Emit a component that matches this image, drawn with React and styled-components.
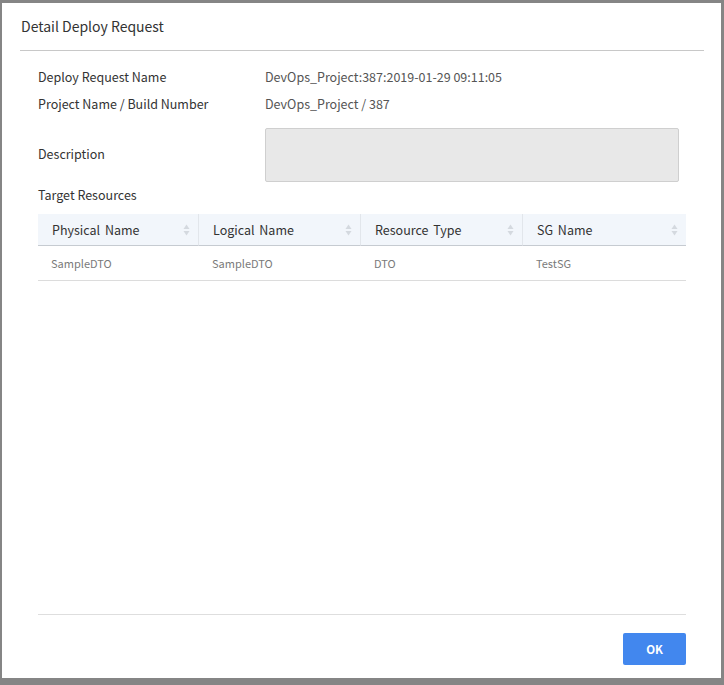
import React from 'react';
import styled, { createGlobalStyle } from 'styled-components';

const Global = createGlobalStyle`
  html, body {
    margin: 0;
    padding: 0;
    background: #858585;
  }
  body {
    font-family: "Noto Sans CJK KR", "Noto Sans", sans-serif;
  }
`;

const Overlay = styled.div`
  width: 724px;
  height: 685px;
  box-sizing: border-box;
  padding: 3px 3px 7px 2px;
`;

const Modal = styled.div`
  height: 100%;
  background: #fff;
  display: flex;
  flex-direction: column;
`;

const Header = styled.div`
  height: 48px;
  margin: 0 17px 0 18px;
  border-bottom: 1px solid #c8c8c8;
  display: flex;
  align-items: center;
  padding-left: 1px;
  padding-bottom: 2px;
  box-sizing: border-box;
`;

const Title = styled.h2`
  margin: 0;
  font-size: 14px;
  font-weight: 400;
  color: #333;
`;

const Body = styled.div`
  flex: 1;
  padding: 12px 35px 0 36px;
  display: flex;
  flex-direction: column;
`;

const Row = styled.div`
  display: flex;
  align-items: center;
  height: ${(p) => p.$h || 27}px;
  margin-top: ${(p) => p.$mt || 0}px;
`;

const Label = styled.div`
  width: 227px;
  font-size: 12.5px;
  color: #333;
  padding-bottom: ${(p) => p.$lift || 0}px;
`;

const Value = styled.div`
  font-size: 12.5px;
  color: #555;
`;

const DescBox = styled.div`
  width: 414px;
  height: 54px;
  box-sizing: border-box;
  background: #e8e8e8;
  border: 1px solid #cfcfcf;
  border-radius: 2px;
`;

const Section = styled.div`
  font-size: 12.5px;
  color: #333;
  height: 24px;
  display: flex;
  align-items: center;
  margin-bottom: 8px;
`;

const Table = styled.div`
  display: grid;
  grid-template-columns: 161px 162px 162px 163px;
`;

const Th = styled.div`
  height: 31px;
  background: #f2f6fb;
  border-bottom: 1px solid #c6cbd1;
  border-right: ${(p) => (p.$last ? 'none' : '1px solid #e2e6eb')};
  display: flex;
  align-items: center;
  justify-content: space-between;
  padding: 0 8px 0 14px;
  font-size: 12.5px;
  font-weight: 400;
  word-spacing: 2px;
  color: #333;
`;

const Td = styled.div`
  height: 34px;
  border-bottom: 1px solid #dcdcdc;
  display: flex;
  align-items: center;
  padding-left: 13px;
  font-size: 11px;
  color: #7a7a7a;
`;

const Footer = styled.div`
  margin: 0 35px 0 36px;
  border-top: 1px solid #dedede;
  padding: 18px 0 13px;
  display: flex;
  justify-content: flex-end;
`;

const OkButton = styled.button`
  width: 63px;
  height: 32px;
  border: none;
  border-radius: 2px;
  background: #4287ee;
  color: #fff;
  font-family: inherit;
  font-size: 11.5px;
  font-weight: 700;
  cursor: pointer;
`;

const SortIcon = () => (
  <svg width="7" height="12" viewBox="0 0 7 12">
    <path d="M3.5 0.5 L6.5 5 L0.5 5 Z" fill="#d4d9df" />
    <path d="M3.5 11.5 L6.5 7 L0.5 7 Z" fill="#d4d9df" />
  </svg>
);

const columns = ['Physical Name', 'Logical Name', 'Resource Type', 'SG Name'];
const rows = [['SampleDTO', 'SampleDTO', 'DTO', 'TestSG']];

export default function App() {
  return (
    <>
      <Global />
      <Overlay>
        <Modal>
          <Header>
            <Title>Detail Deploy Request</Title>
          </Header>
          <Body>
            <Row>
              <Label>Deploy Request Name</Label>
              <Value>DevOps_Project:387:2019-01-29 09:11:05</Value>
            </Row>
            <Row>
              <Label>Project Name / Build Number</Label>
              <Value>DevOps_Project / 387</Value>
            </Row>
            <Row $h={54} $mt={11}>
              <Label $lift={3}>Description</Label>
              <DescBox />
            </Row>
            <Section>Target Resources</Section>
            <Table>
              {columns.map((c, i) => (
                <Th key={c} $last={i === columns.length - 1}>
                  {c}
                  <SortIcon />
                </Th>
              ))}
              {rows.map((r) =>
                r.map((v, i) => <Td key={i}>{v}</Td>)
              )}
            </Table>
          </Body>
          <Footer>
            <OkButton>OK</OkButton>
          </Footer>
        </Modal>
      </Overlay>
    </>
  );
}
